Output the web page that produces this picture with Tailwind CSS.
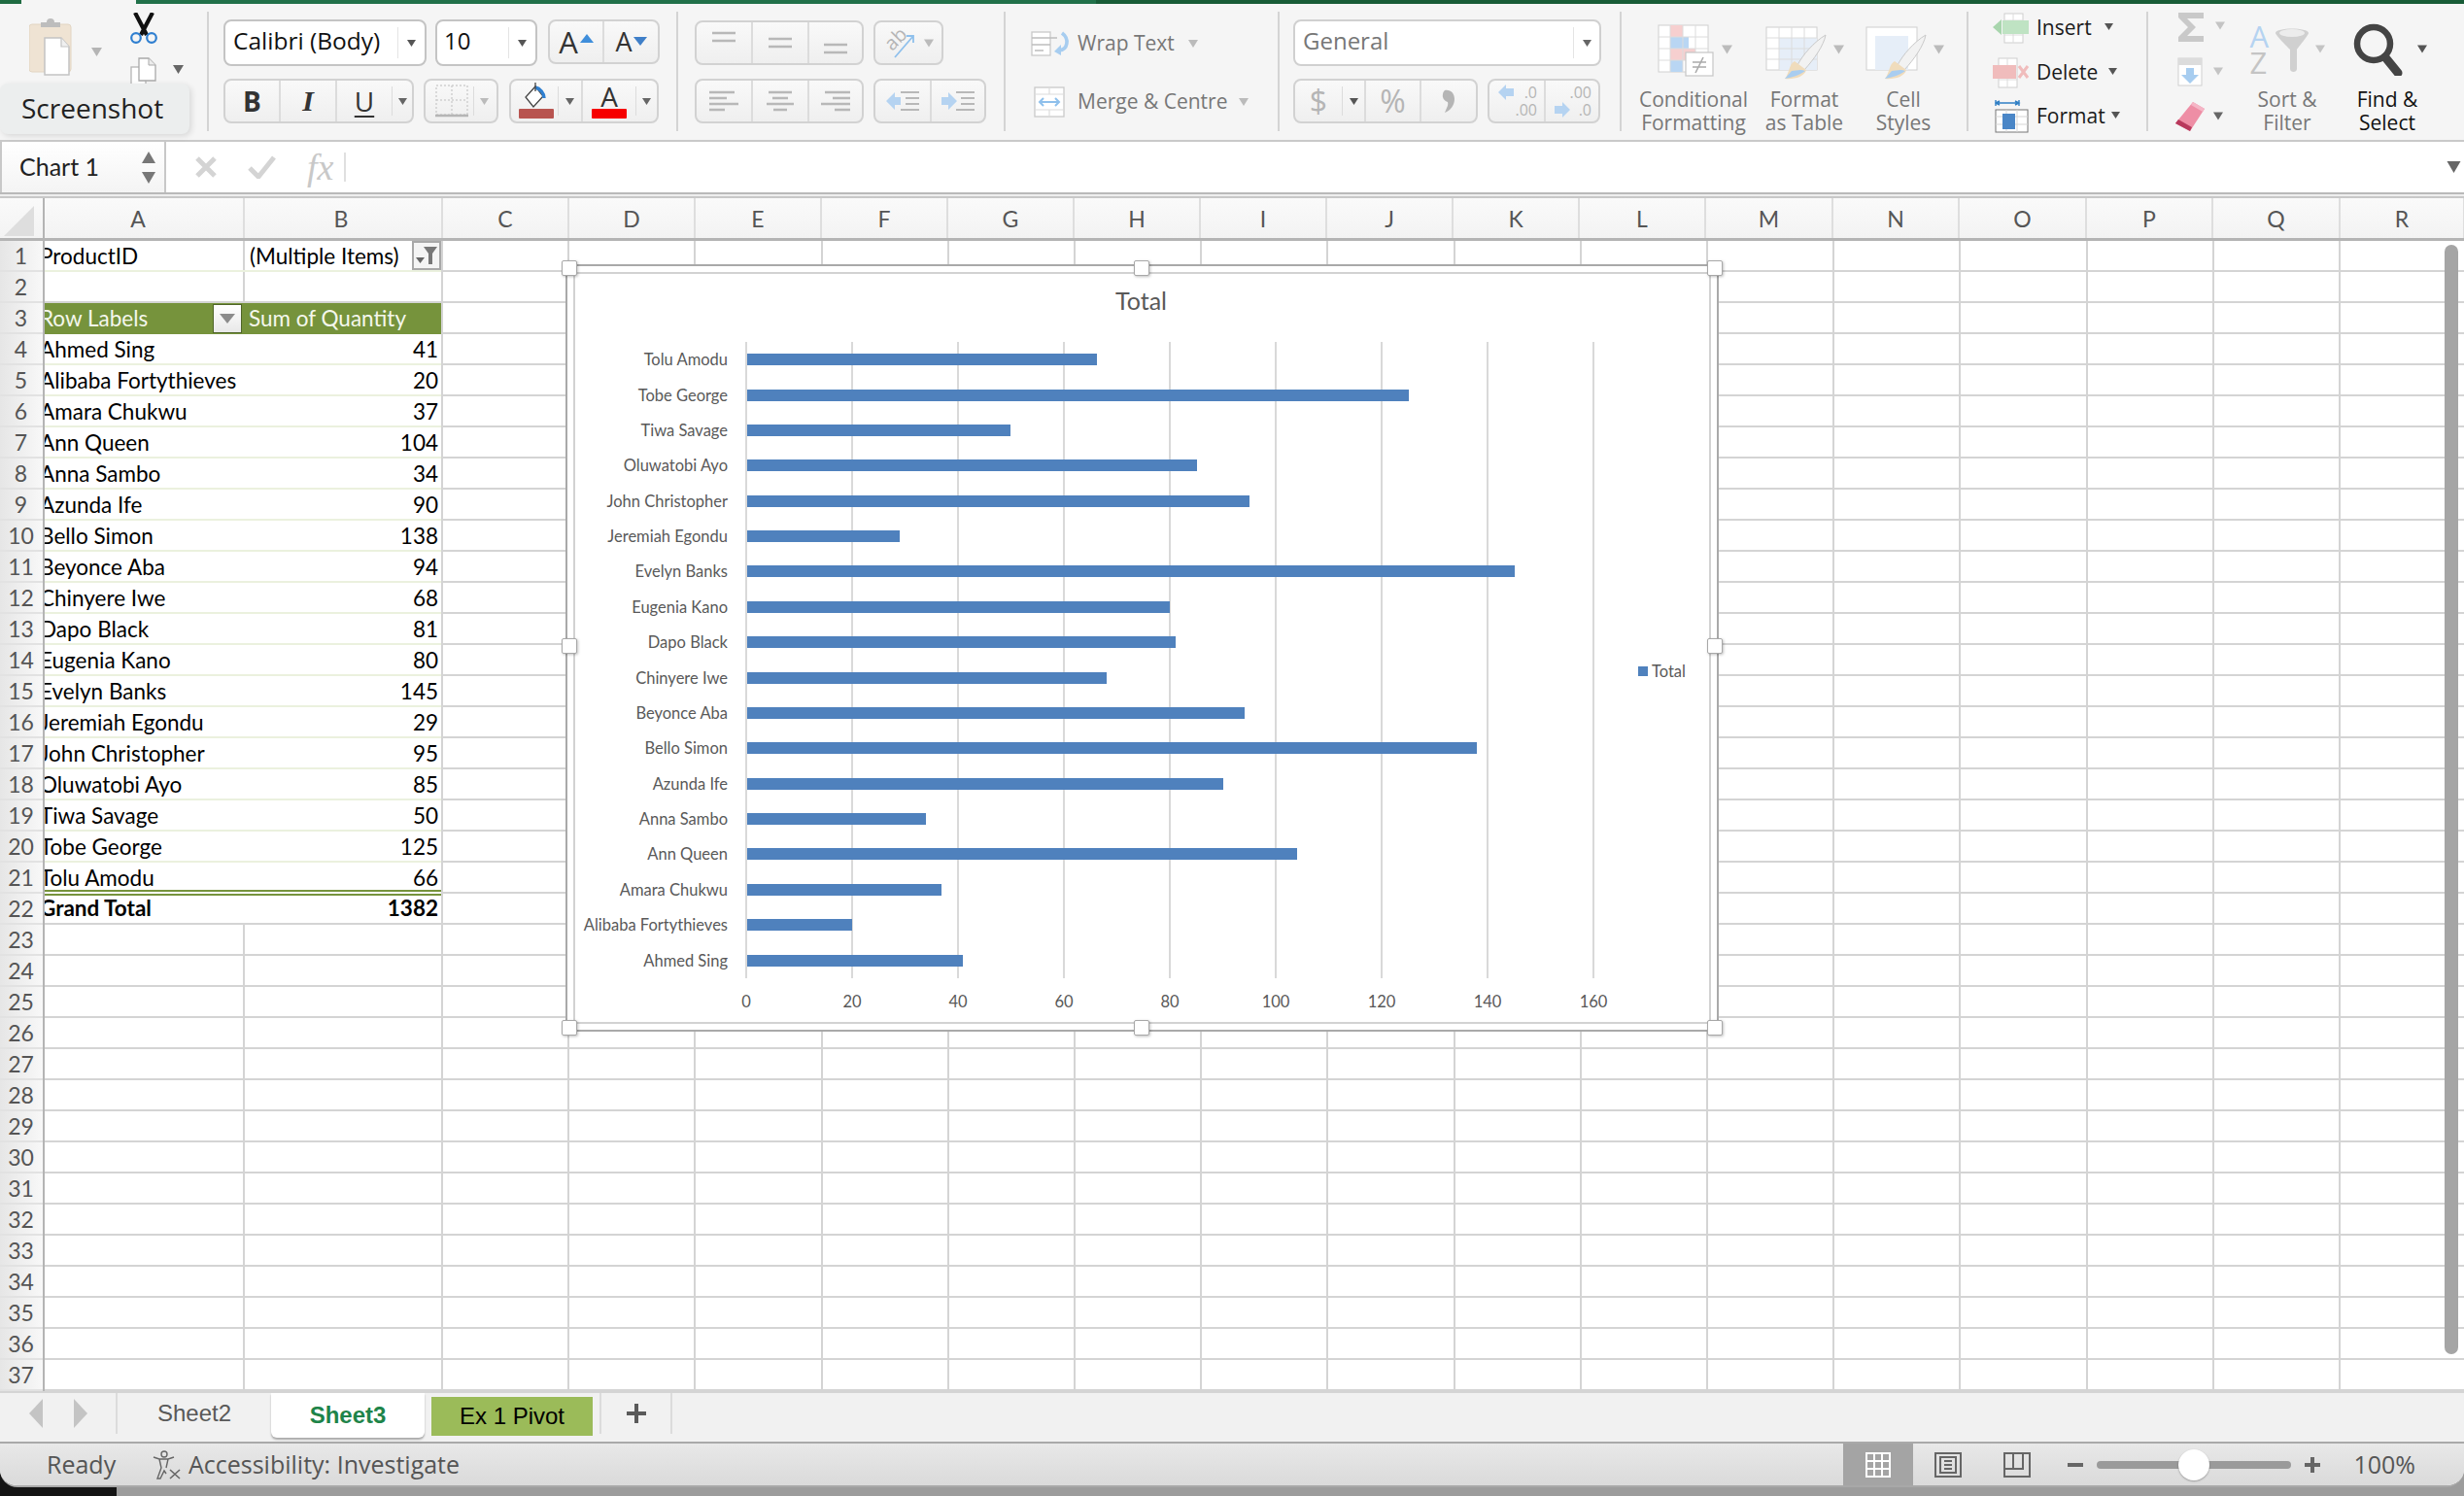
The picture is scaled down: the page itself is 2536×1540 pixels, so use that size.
<!doctype html>
<html>
<head>
<meta charset="utf-8">
<script src="https://cdn.jsdelivr.net/npm/@tailwindcss/browser@4"></script>
</head>
<body class="m-0">
<div class="relative w-[2536px] h-[1540px] overflow-hidden bg-[#9c9c9c] font-['Open_Sans',sans-serif]">
<div class="absolute left-0 bottom-0 w-[120px] h-[40px] bg-[#141414]"></div>
<div class="relative h-[1531px] flex flex-col rounded-b-[18px] overflow-hidden bg-white border-b-2 border-[#a8a8a8]">

<!-- title strip -->
<div class="flex h-[4px] shrink-0 bg-[#185c37]">
  <div class="w-[22px] bg-[#1f6b41]"></div><div class="w-[118px] bg-[#f5f5f5]"></div><div class="w-[988px] bg-[#21714a]"></div>
</div>

<!-- ribbon -->
<div class="relative flex h-[142px] shrink-0 bg-[#f5f5f5] border-b-2 border-[#c9c9c9]">
  <!-- clipboard -->
  <div class="flex w-[213px] shrink-0 pl-[30px] pt-[9px]">
    <svg class="w-[48px] h-[62px] mt-[5px]" viewBox="0 0 48 62"><rect x="0" y="7" width="43" height="49" rx="3" fill="#efe3d3" stroke="#e2d5c2"/><path d="M12 8h20V3H26a4 4 0 0 0-8 0h-6z" fill="#bdbdbd" transform="translate(0 2)"/><path d="M16 21h17l8 9v29H16z" fill="#fff" stroke="#c4c4c4" stroke-width="1.5"/><path d="M33 21v9h8" fill="#f0f0f0" stroke="#c4c4c4" stroke-width="1.2"/></svg>
    <svg class="w-[11px] h-[9px] mt-[36px] ml-[16px]" viewBox="0 0 10 8"><path d="M0 0h10L5 8z" fill="#b5b5b5"/></svg>
    <div class="flex flex-col ml-[29px]">
      <svg class="w-[28px] h-[32px]" viewBox="0 0 28 32"><path d="M5 0l12 23M23 0L11 23" stroke="#111" stroke-width="4.2" fill="none"/><circle cx="6" cy="26" r="4.800" fill="none" stroke="#2f7fd0" stroke-width="2.200"/><circle cx="22" cy="26" r="4.800" fill="none" stroke="#2f7fd0" stroke-width="2.200"/></svg>
      <div class="flex mt-[14px]">
        <svg class="w-[28px] h-[28px]" viewBox="0 0 28 28"><rect x="1" y="10" width="15" height="18" fill="#fff" stroke="#b5b5b5" stroke-width="1.3"/><path d="M9 1h10l7 7v16H9z" fill="#fff" stroke="#a9a9a9" stroke-width="1.3"/><path d="M19 1v7h7" fill="#ececec" stroke="#a9a9a9" stroke-width="1"/></svg>
        <svg class="w-[11px] h-[9px] mt-[8px] ml-[16px]" viewBox="0 0 10 8"><path d="M0 0h10L5 8z" fill="#666"/></svg>
      </div>
    </div>
  </div>
  <div class="w-[2px] h-[123px] mt-[8px] bg-[#d4d4d4] shrink-0"></div>

  <!-- font -->
  <div class="flex flex-col w-[481px] shrink-0 pl-[15px] pt-[16px] gap-[13px]">
    <div class="flex h-[48px]">
      <div class="flex items-center justify-between w-[209px] rounded-lg border-2 border-[#c4c4c4] bg-white pl-[8px] pr-[9px] text-[24.500px] leading-[30px] text-[#111]"><span class="mb-[4px] whitespace-nowrap">Calibri (Body)</span><span class="flex items-center h-[32px] border-l border-[#e4e4e4] pl-[9px]"><svg class="w-[9px] h-[9px]" viewBox="0 0 10 8"><path d="M0 0h10L5 8z" fill="#555"/></svg></span></div>
      <div class="flex items-center justify-between w-[105px] ml-[9px] rounded-lg border-2 border-[#c4c4c4] bg-white pl-[7px] pr-[9px] text-[24px] leading-[30px] text-[#111]"><span class="mb-[4px]">10</span><span class="flex items-center h-[32px] border-l border-[#e4e4e4] pl-[9px]"><svg class="w-[9px] h-[9px]" viewBox="0 0 10 8"><path d="M0 0h10L5 8z" fill="#555"/></svg></span></div>
      <div class="flex w-[115px] ml-[11px] h-[46px] rounded-lg border-2 border-[#d2d2d2] bg-gradient-to-b from-[#f9f9f9] to-[#efefef] text-[#333] leading-[38px]">
        <div class="flex items-center justify-center gap-[2px] w-[56px] border-r-2 border-[#dcdcdc] text-[31px]"><span>A</span><svg class="w-[14px] h-[9px] mb-[8px]" viewBox="0 0 14 9"><path d="M7 0l7 9H0z" fill="#3f8edb"/></svg></div>
        <div class="flex items-center justify-center gap-[1px] flex-1 text-[27px]"><span>A</span><svg class="w-[14px] h-[9px] mb-[2px]" viewBox="0 0 14 9"><path d="M7 9L0 0h14z" fill="#3f7fc8"/></svg></div>
      </div>
    </div>
    <div class="flex h-[46px]">
      <div class="flex w-[196px] rounded-lg border-2 border-[#d2d2d2] bg-gradient-to-b from-[#f9f9f9] to-[#efefef] text-[#333] text-[28px] leading-[38px]">
        <div class="flex items-center justify-center w-[57px] border-r-2 border-[#dcdcdc] font-bold">B</div>
        <div class="flex items-center justify-center w-[58px] border-r-2 border-[#dcdcdc] italic font-bold font-['Liberation_Serif',serif] text-[30px]">I</div>
        <div class="flex items-center justify-center w-[56px] underline underline-offset-[4px] font-normal">U</div>
        <div class="flex items-center flex-1 pl-[1px] h-[30px] mt-[6px] border-l border-[#dcdcdc]"><svg class="w-[9px] h-[9px] ml-[5px]" viewBox="0 0 10 8"><path d="M0 0h10L5 8z" fill="#666"/></svg></div>
      </div>
      <div class="flex items-center w-[77px] ml-[10px] rounded-lg border-2 border-[#d2d2d2] bg-gradient-to-b from-[#f9f9f9] to-[#efefef]">
        <svg class="w-[34px] h-[34px] ml-[10px]" viewBox="0 0 34 34"><path d="M1 1h32v30H1zM17 1v30M1 16h32" fill="none" stroke="#cfcfcf" stroke-width="1.5" stroke-dasharray="2 2"/><path d="M0 32h34" stroke="#b5b5b5" stroke-width="2.4"/></svg>
        <span class="h-[30px] border-l border-[#dcdcdc] ml-[5px] mr-[6px]"></span><svg class="w-[9px] h-[9px]" viewBox="0 0 10 8"><path d="M0 0h10L5 8z" fill="#bbb"/></svg>
      </div>
      <div class="flex w-[154px] ml-[11px] rounded-lg border-2 border-[#d2d2d2] bg-gradient-to-b from-[#f9f9f9] to-[#efefef]">
        <div class="flex flex-col items-center w-[48px] pt-[2px] pl-[3px]">
          <svg class="w-[26px] h-[27px]" viewBox="0 0 26 27"><path d="M12 4L2 15l8 10 10-11z" fill="#fff" stroke="#444" stroke-width="1.3"/><path d="M12 5c5 1 9 6 9 11" fill="none" stroke="#2f7fd0" stroke-width="3.4"/><path d="M12 0v9" stroke="#444" stroke-width="1.3"/></svg>
          <div class="w-[36px] h-[10px] bg-[#b85450] rounded-[1px]"></div>
        </div>
        <div class="flex items-center justify-center w-[24px] h-[30px] mt-[6px] border-l border-[#dcdcdc]"><svg class="w-[9px] h-[9px]" viewBox="0 0 10 8"><path d="M0 0h10L5 8z" fill="#666"/></svg></div>
        <div class="flex flex-col items-center w-[56px] border-l-2 border-[#dcdcdc] text-[#333] text-[28px] pt-[1px]"><span class="h-[28px] leading-[30px]">A</span><div class="w-[36px] h-[10px] bg-[#f60000] rounded-[1px]"></div></div>
        <div class="flex items-center justify-center flex-1 h-[30px] mt-[6px] border-l border-[#dcdcdc]"><svg class="w-[9px] h-[9px]" viewBox="0 0 10 8"><path d="M0 0h10L5 8z" fill="#666"/></svg></div>
      </div>
    </div>
  </div>
  <div class="w-[2px] h-[123px] mt-[8px] bg-[#d4d4d4] shrink-0"></div>

  <!-- alignment -->
  <div class="flex flex-col w-[335px] shrink-0 pl-[17px] pt-[17px] gap-[14px]">
    <div class="flex h-[46px]">
      <div class="flex w-[174px] rounded-lg border-2 border-[#d2d2d2] bg-gradient-to-b from-[#f9f9f9] to-[#efefef]">
        <div class="flex justify-center w-[58px] border-r-2 border-[#dcdcdc] pt-[9px]"><svg class="w-[26px] h-[12px]" viewBox="0 0 26 12"><path d="M1 2h24M1 10h24" stroke="#b8b8b8" stroke-width="2.4"/></svg></div>
        <div class="flex justify-center items-center w-[58px] border-r-2 border-[#dcdcdc]"><svg class="w-[26px] h-[12px]" viewBox="0 0 26 12"><path d="M1 2h24M1 10h24" stroke="#b8b8b8" stroke-width="2.4"/></svg></div>
        <div class="flex justify-center items-end flex-1 pb-[9px]"><svg class="w-[26px] h-[12px]" viewBox="0 0 26 12"><path d="M1 2h24M1 10h24" stroke="#b8b8b8" stroke-width="2.4"/></svg></div>
      </div>
      <div class="flex items-center w-[72px] ml-[10px] rounded-lg border-2 border-[#d2d2d2] bg-gradient-to-b from-[#f9f9f9] to-[#efefef]">
        <div class="relative w-[36px] h-[34px] ml-[8px]">
          <svg class="absolute inset-0 w-[36px] h-[34px]" viewBox="0 0 36 34"><path d="M12 32L31 10M24 10h7v7" stroke="#8fc0ec" stroke-width="1.8" fill="none"/></svg>
          <span class="absolute left-[1px] top-[1px] -rotate-45 text-[20px] leading-[24px] text-[#b5b5b5]">ab</span>
        </div>
        <svg class="w-[10px] h-[9px] ml-[6px]" viewBox="0 0 10 8"><path d="M0 0h10L5 8z" fill="#bbb"/></svg>
      </div>
    </div>
    <div class="flex h-[46px]">
      <div class="flex w-[174px] rounded-lg border-2 border-[#d2d2d2] bg-gradient-to-b from-[#f9f9f9] to-[#efefef]">
        <div class="flex justify-center items-center w-[58px] border-r-2 border-[#dcdcdc]"><svg class="w-[30px] h-[22px]" viewBox="0 0 30 22"><path d="M0 2h26M0 8h18M0 14h30M0 20h16" stroke="#b8b8b8" stroke-width="2.4"/></svg></div>
        <div class="flex justify-center items-center w-[58px] border-r-2 border-[#dcdcdc]"><svg class="w-[28px] h-[22px]" viewBox="0 0 28 22"><path d="M2 2h24M6 8h16M0 14h28M7 20h14" stroke="#b8b8b8" stroke-width="2.4"/></svg></div>
        <div class="flex justify-center items-center flex-1"><svg class="w-[30px] h-[22px]" viewBox="0 0 30 22"><path d="M4 2h26M12 8h18M0 14h30M14 20h16" stroke="#b8b8b8" stroke-width="2.4"/></svg></div>
      </div>
      <div class="flex w-[116px] ml-[10px] rounded-lg border-2 border-[#d2d2d2] bg-gradient-to-b from-[#f9f9f9] to-[#efefef]">
        <div class="flex justify-center items-center w-[58px] border-r-2 border-[#dcdcdc]"><svg class="w-[34px] h-[22px]" viewBox="0 0 34 22"><path d="M0 11L9 2v5h6v8H9v5z" fill="#b5d3f1"/><path d="M15 2h19M20 8h14M20 14h14M15 20h19" stroke="#b8b8b8" stroke-width="2.2"/></svg></div>
        <div class="flex justify-center items-center flex-1"><svg class="w-[34px] h-[22px]" viewBox="0 0 34 22"><path d="M16 11L7 2v5H0v8h7v5z" fill="#b5d3f1"/><path d="M15 2h19M20 8h14M20 14h14M15 20h19" stroke="#b8b8b8" stroke-width="2.2"/></svg></div>
      </div>
    </div>
  </div>
  <div class="w-[2px] h-[123px] mt-[8px] bg-[#d4d4d4] shrink-0"></div>

  <!-- wrap -->
  <div class="flex flex-col w-[280px] shrink-0 text-[21px] text-[#777] pl-[26px] pt-[26px] gap-[30px]">
    <div class="flex items-center h-[30px]">
      <svg class="w-[40px] h-[26px]" viewBox="0 0 40 26"><rect x="1" y="1" width="19" height="24" fill="#fff" stroke="#c9c9c9" stroke-width="1.3"/><path d="M1 7h26M1 14h19M4 20h9" stroke="#bdbdbd" stroke-width="1.4"/><path d="M32 2c8 6 6 17-3 18" fill="none" stroke="#a7cdf0" stroke-width="3.6"/><path d="M31 14l-7 7 7 4z" fill="#a7cdf0"/></svg>
      <span class="ml-[8px] whitespace-nowrap">Wrap Text</span>
      <svg class="w-[10px] h-[8px] ml-[14px]" viewBox="0 0 10 8"><path d="M0 0h10L5 8z" fill="#bbb"/></svg>
    </div>
    <div class="flex items-center h-[30px]">
      <svg class="w-[32px] h-[32px] ml-[3px]" viewBox="0 0 32 32"><rect x="1" y="1" width="30" height="30" fill="#fff" stroke="#c9c9c9" stroke-width="1.3"/><path d="M16 1v7M16 24v7M1 8h30M1 24h30" stroke="#dcdcdc" stroke-width="1.2"/><path d="M6 16h20M10 12l-4 4 4 4M22 12l4 4-4 4" fill="none" stroke="#8fc0ec" stroke-width="2"/></svg>
      <span class="ml-[13px] whitespace-nowrap">Merge &amp; Centre</span>
      <svg class="w-[10px] h-[8px] ml-[12px]" viewBox="0 0 10 8"><path d="M0 0h10L5 8z" fill="#bbb"/></svg>
    </div>
  </div>
  <div class="w-[2px] h-[123px] mt-[8px] bg-[#d4d4d4] shrink-0"></div>

  <!-- number -->
  <div class="flex flex-col w-[350px] shrink-0 pl-[14px] pt-[16px] gap-[13px]">
    <div class="flex items-center justify-between w-[317px] h-[48px] rounded-lg border-2 border-[#d0d0d0] bg-white pl-[8px] pr-[8px] text-[24px] leading-[30px] text-[#777]"><span class="mb-[4px]">General</span><span class="flex items-center h-[32px] border-l border-[#e4e4e4] pl-[9px]"><svg class="w-[9px] h-[9px]" viewBox="0 0 10 8"><path d="M0 0h10L5 8z" fill="#666"/></svg></span></div>
    <div class="flex h-[46px]">
      <div class="flex w-[190px] rounded-lg border-2 border-[#d2d2d2] bg-gradient-to-b from-[#f9f9f9] to-[#efefef] text-[#b5b5b5] text-[32px] leading-[38px]">
        <div class="flex items-center w-[73px] border-r-2 border-[#dcdcdc]"><span class="w-[48px] text-center">$</span><span class="flex items-center h-[30px] border-l border-[#dcdcdc] pl-[7px]"><svg class="w-[9px] h-[9px]" viewBox="0 0 10 8"><path d="M0 0h10L5 8z" fill="#555"/></svg></span></div>
        <div class="flex items-center justify-center w-[57px] border-r-2 border-[#dcdcdc]">%</div>
        <div class="flex items-center justify-center flex-1"><svg class="w-[14px] h-[24px]" viewBox="0 0 14 24"><path d="M3 1c6-1 10 3 10 9 0 6-4 12-10 14 2-5 4-8 3-11C3 12 0 9 1 5 1 3 2 2 3 1z" fill="#b5b5b5"/></svg></div>
      </div>
      <div class="flex w-[116px] ml-[10px] rounded-lg border-2 border-[#d2d2d2] bg-gradient-to-b from-[#f9f9f9] to-[#efefef] text-[#b5b5b5] text-[16px] leading-[18px]">
        <div class="relative flex flex-col items-end justify-center w-[58px] border-r-2 border-[#dcdcdc] pr-[7px]"><svg class="absolute left-[9px] top-[4px] w-[16px] h-[16px]" viewBox="0 0 16 16"><path d="M0 8l8-8v4h8v8H8v4z" fill="#b5d3f1"/></svg><span>.0</span><span>.00</span></div>
        <div class="relative flex flex-col items-end justify-center flex-1 pr-[7px]"><svg class="absolute left-[9px] top-[22px] w-[16px] h-[16px]" viewBox="0 0 16 16"><path d="M16 8L8 0v4H0v8h8v4z" fill="#b5d3f1"/></svg><span>.00</span><span>.0</span></div>
      </div>
    </div>
  </div>
  <div class="w-[2px] h-[123px] mt-[8px] bg-[#d4d4d4] shrink-0"></div>

  <!-- styles -->
  <div class="flex w-[355px] shrink-0 text-[21px] leading-[24px] text-[#777] text-center">
    <div class="flex flex-col w-[148px] items-center">
      <div class="flex h-[86px] pt-[21px] pl-[2px]">
        <svg class="w-[58px] h-[54px]" viewBox="0 0 58 54"><rect x="1" y="1" width="51" height="48" fill="#fff" stroke="#d0d0d0"/><rect x="13" y="1" width="13" height="12" fill="#f6cfcf"/><rect x="13" y="13" width="19" height="12" fill="#b9d6f3"/><rect x="13" y="25" width="26" height="12" fill="#f6cfcf"/><rect x="13" y="37" width="13" height="12" fill="#b9d6f3"/><path d="M13 1v48M26 1v48M39 1v48M1 13h51M1 25h51M1 37h51" stroke="#dcdcdc" stroke-width="1"/><rect x="29" y="29" width="28" height="24" fill="#fff" stroke="#c9c9c9" stroke-width="1.3"/><path d="M36 39h14M36 44h14M47 34l-8 16" stroke="#aaa" stroke-width="1.6"/></svg>
        <svg class="w-[11px] h-[10px] mt-[21px] ml-[8px]" viewBox="0 0 10 8"><path d="M0 0h10L5 8z" fill="#bbb"/></svg>
      </div>
      <span class="whitespace-nowrap">Conditional<br>Formatting</span>
    </div>
    <div class="flex flex-col w-[80px] items-center">
      <div class="flex self-start h-[86px] pt-[23px]">
        <svg class="w-[64px] h-[56px]" viewBox="0 0 64 56"><rect x="1" y="1" width="52" height="44" fill="#fff" stroke="#d0d0d0"/><rect x="14" y="12" width="39" height="33" fill="#e6eef8"/><path d="M14 1v44M27 1v44M40 1v44M1 12h52M1 23h52M1 34h52" stroke="#dcdcdc"/><path d="M62 9C50 16 38 30 33 40l7 5C50 34 60 20 62 9z" fill="#f2f2f2" stroke="#c9c9c9"/><path d="M30 36c-6 3-5 12-10 18 10 1 20-2 22-9z" fill="#f0dcbc"/><path d="M20 54c6-1 14-3 21-8-5-2-10 0-14 0z" fill="#a9cdf0"/></svg>
        <svg class="w-[11px] h-[10px] mt-[19px] ml-[6px]" viewBox="0 0 10 8"><path d="M0 0h10L5 8z" fill="#bbb"/></svg>
      </div>
      <span class="whitespace-nowrap">Format<br>as Table</span>
    </div>
    <div class="flex flex-col w-[124px] items-center">
      <div class="flex self-start h-[86px] pt-[23px] pl-[23px]">
        <svg class="w-[64px] h-[56px]" viewBox="0 0 64 56"><rect x="1" y="1" width="52" height="44" fill="#fff" stroke="#d0d0d0"/><rect x="10" y="10" width="34" height="35" fill="#e6eef8"/><path d="M62 9C50 16 38 30 33 40l7 5C50 34 60 20 62 9z" fill="#f2f2f2" stroke="#c9c9c9"/><path d="M30 36c-6 3-5 12-10 18 10 1 20-2 22-9z" fill="#f0dcbc"/><path d="M20 54c6-1 14-3 21-8-5-2-10 0-14 0z" fill="#a9cdf0"/></svg>
        <svg class="w-[11px] h-[10px] mt-[19px] ml-[6px]" viewBox="0 0 10 8"><path d="M0 0h10L5 8z" fill="#bbb"/></svg>
      </div>
      <span class="whitespace-nowrap">Cell<br>Styles</span>
    </div>
  </div>
  <div class="w-[2px] h-[123px] mt-[8px] bg-[#d4d4d4] shrink-0"></div>

  <!-- cells -->
  <div class="flex flex-col w-[183px] shrink-0 pl-[25px] pt-[9px] text-[21px] text-[#1a1a1a]">
    <div class="flex items-center h-[32px]"><svg class="w-[38px] h-[32px]" viewBox="0 0 38 32"><rect x="12" y="1" width="19" height="30" fill="#fff" stroke="#cfcfcf"/><path d="M21 1v30M12 8h19M12 23h19" stroke="#dcdcdc"/><rect x="10" y="8" width="27" height="14" fill="#bfe3c3"/><path d="M0 15l9-8v16z" fill="#a8d5ad"/></svg><span class="ml-[7px]">Insert</span><svg class="w-[9px] h-[9px] ml-[13px] mb-[4px]" viewBox="0 0 10 8"><path d="M0 0h10L5 8z" fill="#555"/></svg></div>
    <div class="flex items-center h-[32px] mt-[14px]"><svg class="w-[38px] h-[32px]" viewBox="0 0 38 32"><rect x="6" y="1" width="19" height="30" fill="#fff" stroke="#cfcfcf"/><path d="M15 1v30M6 23h19" stroke="#dcdcdc"/><rect x="0" y="8" width="24" height="14" fill="#f0bcbc"/><path d="M27 9l9 12M36 9l-9 12" stroke="#f0bcbc" stroke-width="3"/></svg><span class="ml-[7px]">Delete</span><svg class="w-[9px] h-[9px] ml-[11px] mb-[4px]" viewBox="0 0 10 8"><path d="M0 0h10L5 8z" fill="#555"/></svg></div>
    <div class="flex items-center h-[36px] mt-[11px]"><svg class="w-[36px] h-[34px] ml-[2px]" viewBox="0 0 36 34"><path d="M1 3h24M1 0v6M25 0v6M5 1L1 3l4 2M21 1l4 2-4 2" stroke="#2f7fc5" stroke-width="1.4" fill="none"/><rect x="1" y="10" width="33" height="23" fill="#fff" stroke="#777"/><path d="M12 10v23M23 10v23M1 17h33M1 25h33" stroke="#d5d5d5"/><rect x="8" y="14" width="13" height="16" fill="#4a86c7"/></svg><span class="ml-[7px]">Format</span><svg class="w-[9px] h-[9px] ml-[6px] mb-[4px]" viewBox="0 0 10 8"><path d="M0 0h10L5 8z" fill="#555"/></svg></div>
  </div>
  <div class="w-[2px] h-[123px] mt-[8px] bg-[#d4d4d4] shrink-0"></div>

  <!-- editing -->
  <div class="flex shrink-0 text-[21px] leading-[24px] text-center">
    <div class="flex flex-col w-[92px] pl-[30px] pt-[8px]">
      <div class="flex items-start"><svg class="w-[28px] h-[32px]" viewBox="0 0 28 32"><path d="M1 1h26v6H10l9 9-9 9h17v6H1v-5l10-10L1 6z" fill="#c9c9c9"/></svg><svg class="w-[10px] h-[9px] ml-[11px] mt-[10px]" viewBox="0 0 10 8"><path d="M0 0h10L5 8z" fill="#c4c4c4"/></svg></div>
      <div class="flex items-start mt-[15px]"><svg class="w-[26px] h-[30px]" viewBox="0 0 26 30"><rect x="1" y="1" width="24" height="28" fill="#fff" stroke="#cfcfcf"/><rect x="1" y="1" width="24" height="7" fill="#dcdcdc"/><path d="M9 11h8v7h5l-9 9-9-9h5z" fill="#a7cdf0"/></svg><svg class="w-[10px] h-[9px] ml-[11px] mt-[10px]" viewBox="0 0 10 8"><path d="M0 0h10L5 8z" fill="#c4c4c4"/></svg></div>
      <div class="flex items-start mt-[15px] -ml-[4px]"><svg class="w-[33px] h-[32px]" viewBox="0 0 33 32"><path d="M20 1l12 7-15 23L2 23z" fill="#ee8ea5"/><path d="M2 23l15 8 2-4L5 19z" fill="#b8395c"/><path d="M20 1l12 7-2 3L18 4z" fill="#f5b6c6"/></svg><svg class="w-[10px] h-[9px] ml-[8px] mt-[11px]" viewBox="0 0 10 8"><path d="M0 0h10L5 8z" fill="#666"/></svg></div>
    </div>
    <div class="flex flex-col w-[102px] items-center text-[#777]">
      <div class="flex h-[86px] pt-[20px]">
        <div class="flex flex-col w-[25px] text-left text-[31px] leading-[27px]"><span class="text-[#b5d3f1]">A</span><span class="text-[#c4c4c4]">Z</span></div>
        <svg class="w-[37px] h-[54px]" viewBox="25 0 37 54"><path d="M26 10c0-6 34-6 34 0 0 2-10 14-12 17v20c0 4-7 4-7 0V27C38 24 26 12 26 10z" fill="#d0d0d0"/><ellipse cx="43" cy="10" rx="13" ry="4" fill="#ececec"/></svg>
        <svg class="w-[10px] h-[9px] mt-[22px] ml-[5px]" viewBox="0 0 10 8"><path d="M0 0h10L5 8z" fill="#c4c4c4"/></svg>
      </div>
      <span class="whitespace-nowrap">Sort &amp;<br>Filter</span>
    </div>
    <div class="flex flex-col w-[104px] items-center text-[#111]">
      <div class="flex self-start h-[86px] pt-[20px] pl-[17px]">
        <svg class="w-[54px] h-[54px]" viewBox="0 0 54 54"><circle cx="21" cy="21" r="17" fill="none" stroke="#444" stroke-width="6.500"/><path d="M33 35l13 16" stroke="#444" stroke-width="9" stroke-linecap="round"/></svg>
        <svg class="w-[10px] h-[9px] mt-[22px] ml-[12px]" viewBox="0 0 10 8"><path d="M0 0h10L5 8z" fill="#555"/></svg>
      </div>
      <span class="whitespace-nowrap">Find &amp;<br>Select</span>
    </div>
  </div>

  <!-- tooltip -->
  <div class="absolute left-0 top-[82px] w-[195px] h-[52px] flex items-center pl-[22px] pb-[2px] rounded-r-lg rounded-l-lg bg-[#eceeee] shadow-[2px_2px_6px_rgba(0,0,0,0.12)] text-[28px] leading-[36px] text-[#222]">Screenshot</div>
</div>

<!-- formula bar -->
<div class="flex h-[54px] shrink-0 bg-white border-b-2 border-[#b9b9b9]">
  <div class="flex items-center w-[171px] border-l-2 border-r-2 border-[#c8c8c8] bg-gradient-to-b from-white to-[#f4f4f4] pl-[18px] font-['Lato',sans-serif] text-[25px] text-[#222]">
    <span class="flex-1">Chart 1</span>
    <span class="flex flex-col gap-[9px] pr-[9px]"><svg class="w-[14px] h-[12px]" viewBox="0 0 14 12"><path d="M7 0l7 12H0z" fill="#777"/></svg><svg class="w-[14px] h-[12px]" viewBox="0 0 14 12"><path d="M7 12L0 0h14z" fill="#777"/></svg></span>
  </div>
  <div class="flex items-center flex-1 pl-[29px]">
    <svg class="w-[24px] h-[24px]" viewBox="0 0 24 24"><path d="M3 3l18 18M21 3L3 21" stroke="#d4d4d4" stroke-width="5"/></svg>
    <svg class="w-[30px] h-[24px] ml-[31px]" viewBox="0 0 30 24"><path d="M2 13l9 9L27 2" fill="none" stroke="#d4d4d4" stroke-width="5"/></svg>
    <span class="ml-[31px] w-[33px] font-['Liberation_Serif',serif] italic text-[38px] leading-[44px] text-[#c8c8c8]">fx</span>
    <span class="h-[30px] w-[2px] bg-[#e0e0e0] ml-[5px]"></span>
    <span class="flex-1"></span>
    <svg class="w-[15px] h-[12px] mr-[3px]" viewBox="0 0 14 12"><path d="M7 12L0 0h14z" fill="#666"/></svg>
  </div>
</div>
<div class="h-[2px] shrink-0 bg-[#eeeeee]"></div>
<div class="h-[2px] shrink-0 bg-[#c8c8c8]"></div>

<!-- column header -->
<div class="flex h-[44px] shrink-0 border-b-[3px] border-[#b4b4b4] bg-gradient-to-b from-[#fafafa] to-[#f3f3f3] font-['Lato',sans-serif] text-[23px] text-[#555] *:flex *:items-center *:justify-center *:border-r-2 *:border-[#dedede] *:shrink-0 *:pt-[2px]">
  <div class="w-[46px] !border-[#b4b4b4]"><svg class="w-[32px] h-[32px] mt-[4px] -ml-[4px]" viewBox="0 0 32 32"><path d="M31 0v31H0z" fill="#dedede"/></svg></div>
  <div class="w-[206px] pr-[12px]">A</div><div class="w-[204px] pr-[4px]">B</div>
  <div class="w-[130px]">C</div><div class="w-[130px]">D</div><div class="w-[130px]">E</div><div class="w-[130px]">F</div><div class="w-[130px]">G</div><div class="w-[130px]">H</div><div class="w-[130px]">I</div><div class="w-[130px]">J</div><div class="w-[130px]">K</div><div class="w-[130px]">L</div><div class="w-[131px]">M</div><div class="w-[130px]">N</div><div class="w-[131px]">O</div><div class="w-[130px]">P</div><div class="w-[131px]">Q</div><div class="w-[128px]">R</div>
</div>

<!-- sheet -->
<div class="relative flex h-[1184px] shrink-0 font-['Lato',sans-serif] text-[22.500px]">
  <!-- row numbers -->
  <div class="flex flex-col w-[46px] shrink-0 border-r-2 border-[#b4b4b4] bg-gradient-to-r from-[#e6e6e6] to-[#f8f8f8] text-[23px] text-[#555] *:flex *:items-center *:justify-center *:h-8 *:border-b-2 *:border-[#e2e2e2] *:pr-[1px]">
    <div>1</div><div>2</div><div>3</div><div>4</div><div>5</div><div>6</div><div>7</div><div>8</div><div>9</div><div>10</div><div>11</div><div>12</div><div>13</div><div>14</div><div>15</div><div>16</div><div>17</div><div>18</div><div>19</div><div>20</div><div>21</div><div>22</div><div>23</div><div>24</div><div>25</div><div>26</div><div>27</div><div>28</div><div>29</div><div>30</div><div>31</div><div>32</div><div>33</div><div>34</div><div>35</div><div>36</div><div>37</div>
  </div>

  <!-- columns A and B -->
  <div class="flex flex-col w-[410px] shrink-0 border-r-2 border-[#d4d4d4] text-black">
    <div class="flex h-8 border-b-2 border-[#ebf1de] *:leading-[32px]"><div class="relative w-[206px] border-r-2 border-[#d4d4d4] overflow-hidden whitespace-nowrap -indent-[5px]">ProductID</div><div class="flex-1 pl-[5px] relative">(Multiple Items)<span class="absolute right-0 top-0 flex items-center justify-center w-[30px] h-[30px] border-2 border-[#a8a8a8] bg-[#f4f4f4]"><svg class="w-[24px] h-[22px]" viewBox="0 0 24 22"><path d="M1 13h9l-4.500 6z" fill="#666"/><path d="M9 2h14l-5 7v11h-4V9z" fill="#777"/></svg></span></div></div>
    <div class="flex h-8 border-b-2 border-[#d4d4d4]"><div class="w-[206px] border-r-2 border-[#d4d4d4]"></div></div>
    <div class="flex items-center h-8 bg-[#76933c] text-[#f4f7ec] overflow-hidden"><div class="relative w-[206px] whitespace-nowrap -indent-[5px] leading-[32px]">Row Labels<span class="absolute right-[3px] top-[1px] indent-0 flex items-center justify-center w-[30px] h-[30px] bg-gradient-to-b from-white to-[#e8e8e8] border border-[#4f6528]"><svg class="w-[16px] h-[10px]" viewBox="0 0 16 10"><path d="M0 0h16L8 10z" fill="#8c8c8c"/></svg></span></div><div class="flex-1 pl-[4px] leading-[32px]">Sum of Quantity</div></div>
    <div class="flex flex-col *:flex *:justify-between *:h-8 *:border-b-2 *:border-[#ebf1de] *:pr-[3px] *:leading-[31px] *:overflow-hidden *:whitespace-nowrap *:-indent-[5px]">
      <div><span>Ahmed Sing</span><span>41</span></div>
      <div><span>Alibaba Fortythieves</span><span>20</span></div>
      <div><span>Amara Chukwu</span><span>37</span></div>
      <div><span>Ann Queen</span><span>104</span></div>
      <div><span>Anna Sambo</span><span>34</span></div>
      <div><span>Azunda Ife</span><span>90</span></div>
      <div><span>Bello Simon</span><span>138</span></div>
      <div><span>Beyonce Aba</span><span>94</span></div>
      <div><span>Chinyere Iwe</span><span>68</span></div>
      <div><span>Dapo Black</span><span>81</span></div>
      <div><span>Eugenia Kano</span><span>80</span></div>
      <div><span>Evelyn Banks</span><span>145</span></div>
      <div><span>Jeremiah Egondu</span><span>29</span></div>
      <div><span>John Christopher</span><span>95</span></div>
      <div><span>Oluwatobi Ayo</span><span>85</span></div>
      <div><span>Tiwa Savage</span><span>50</span></div>
      <div><span>Tobe George</span><span>125</span></div>
      <div class="!h-[34px] !border-b-[6px] !border-double !border-[#76933c]"><span>Tolu Amodu</span><span>66</span></div>
      <div class="!h-[30px] font-bold !border-[#d4d4d4] !leading-[26px]"><span>Grand Total</span><span>1382</span></div>
    </div>
    <div class="flex-1 bg-[repeating-linear-gradient(180deg,transparent_0,transparent_30px,#d4d4d4_30px,#d4d4d4_32px),linear-gradient(90deg,transparent_204px,#d4d4d4_204px,#d4d4d4_206px,transparent_206px)]"></div>
  </div>

  <!-- remaining cells -->
  <div class="relative flex-1 bg-[repeating-linear-gradient(180deg,transparent_0,transparent_30px,#d4d4d4_30px,#d4d4d4_32px),repeating-linear-gradient(90deg,transparent_0,transparent_128.2px,#d4d4d4_128.2px,#d4d4d4_130.2px)]">
    <!-- chart -->
    <div class="absolute left-[126px] top-[24px] w-[1187px] h-[790px] border-2 border-[#a9a9a9] bg-white p-[6px]">
      <div class="relative h-full border-2 border-[#d2d2d2] bg-white text-[#595959] text-[16.500px] leading-[20px]">
        <div class="absolute left-[175px] top-[70px] w-[874px] h-[655px] bg-[repeating-linear-gradient(90deg,#d9d9d9_0,#d9d9d9_2px,transparent_2px,transparent_109px)]"></div>
        <div class="text-center text-[25px] leading-[30px] pt-[12px] h-[70px] pr-[2px]">Total</div>
        <div class="relative flex flex-col *:flex *:items-center *:h-[36.39px]">
          <div><span class="w-[157px] text-right whitespace-nowrap">Tolu Amodu</span><span class="h-[12px] ml-[20px] bg-[#4f81bd]" style="width:360px"></span></div>
          <div><span class="w-[157px] text-right whitespace-nowrap">Tobe George</span><span class="h-[12px] ml-[20px] bg-[#4f81bd]" style="width:681px"></span></div>
          <div><span class="w-[157px] text-right whitespace-nowrap">Tiwa Savage</span><span class="h-[12px] ml-[20px] bg-[#4f81bd]" style="width:271px"></span></div>
          <div><span class="w-[157px] text-right whitespace-nowrap">Oluwatobi Ayo</span><span class="h-[12px] ml-[20px] bg-[#4f81bd]" style="width:463px"></span></div>
          <div><span class="w-[157px] text-right whitespace-nowrap">John Christopher</span><span class="h-[12px] ml-[20px] bg-[#4f81bd]" style="width:517px"></span></div>
          <div><span class="w-[157px] text-right whitespace-nowrap">Jeremiah Egondu</span><span class="h-[12px] ml-[20px] bg-[#4f81bd]" style="width:157px"></span></div>
          <div><span class="w-[157px] text-right whitespace-nowrap">Evelyn Banks</span><span class="h-[12px] ml-[20px] bg-[#4f81bd]" style="width:790px"></span></div>
          <div><span class="w-[157px] text-right whitespace-nowrap">Eugenia Kano</span><span class="h-[12px] ml-[20px] bg-[#4f81bd]" style="width:435px"></span></div>
          <div><span class="w-[157px] text-right whitespace-nowrap">Dapo Black</span><span class="h-[12px] ml-[20px] bg-[#4f81bd]" style="width:441px"></span></div>
          <div><span class="w-[157px] text-right whitespace-nowrap">Chinyere Iwe</span><span class="h-[12px] ml-[20px] bg-[#4f81bd]" style="width:370px"></span></div>
          <div><span class="w-[157px] text-right whitespace-nowrap">Beyonce Aba</span><span class="h-[12px] ml-[20px] bg-[#4f81bd]" style="width:512px"></span></div>
          <div><span class="w-[157px] text-right whitespace-nowrap">Bello Simon</span><span class="h-[12px] ml-[20px] bg-[#4f81bd]" style="width:751px"></span></div>
          <div><span class="w-[157px] text-right whitespace-nowrap">Azunda Ife</span><span class="h-[12px] ml-[20px] bg-[#4f81bd]" style="width:490px"></span></div>
          <div><span class="w-[157px] text-right whitespace-nowrap">Anna Sambo</span><span class="h-[12px] ml-[20px] bg-[#4f81bd]" style="width:184px"></span></div>
          <div><span class="w-[157px] text-right whitespace-nowrap">Ann Queen</span><span class="h-[12px] ml-[20px] bg-[#4f81bd]" style="width:566px"></span></div>
          <div><span class="w-[157px] text-right whitespace-nowrap">Amara Chukwu</span><span class="h-[12px] ml-[20px] bg-[#4f81bd]" style="width:200px"></span></div>
          <div><span class="w-[157px] text-right whitespace-nowrap">Alibaba Fortythieves</span><span class="h-[12px] ml-[20px] bg-[#4f81bd]" style="width:108px"></span></div>
          <div><span class="w-[157px] text-right whitespace-nowrap">Ahmed Sing</span><span class="h-[12px] ml-[20px] bg-[#4f81bd]" style="width:222px"></span></div>
        </div>
        <div class="flex ml-[121.5px] mt-[14px] *:w-[109px] *:text-center">
          <span>0</span><span>20</span><span>40</span><span>60</span><span>80</span><span>100</span><span>120</span><span>140</span><span>160</span>
        </div>
        <div class="absolute left-[1094px] top-[399px] flex items-center gap-[4px]"><span class="w-[10px] h-[10px] bg-[#4f81bd]"></span><span>Total</span></div>
      </div>
      <span class="absolute -left-[6px] -top-[6px] w-[16px] h-[16px] rounded-[2px] bg-white border border-[#a8a8a8] shadow-[1px_1px_3px_rgba(0,0,0,0.25)]"></span>
      <span class="absolute left-[583px] -top-[6px] w-[16px] h-[16px] rounded-[2px] bg-white border border-[#a8a8a8] shadow-[1px_1px_3px_rgba(0,0,0,0.25)]"></span>
      <span class="absolute -right-[6px] -top-[6px] w-[16px] h-[16px] rounded-[2px] bg-white border border-[#a8a8a8] shadow-[1px_1px_3px_rgba(0,0,0,0.25)]"></span>
      <span class="absolute -left-[6px] top-[383px] w-[16px] h-[16px] rounded-[2px] bg-white border border-[#a8a8a8] shadow-[1px_1px_3px_rgba(0,0,0,0.25)]"></span>
      <span class="absolute -right-[6px] top-[383px] w-[16px] h-[16px] rounded-[2px] bg-white border border-[#a8a8a8] shadow-[1px_1px_3px_rgba(0,0,0,0.25)]"></span>
      <span class="absolute -left-[6px] -bottom-[6px] w-[16px] h-[16px] rounded-[2px] bg-white border border-[#a8a8a8] shadow-[1px_1px_3px_rgba(0,0,0,0.25)]"></span>
      <span class="absolute left-[583px] -bottom-[6px] w-[16px] h-[16px] rounded-[2px] bg-white border border-[#a8a8a8] shadow-[1px_1px_3px_rgba(0,0,0,0.25)]"></span>
      <span class="absolute -right-[6px] -bottom-[6px] w-[16px] h-[16px] rounded-[2px] bg-white border border-[#a8a8a8] shadow-[1px_1px_3px_rgba(0,0,0,0.25)]"></span>
    </div>
    <div class="absolute right-[6px] top-[4px] w-[14px] h-[1142px] rounded-full bg-[#a5a5a5]"></div>
  </div>
</div>

<!-- sheet tabs -->
<div class="flex h-[54px] shrink-0 bg-[#f1f1f1] border-t-2 border-[#d4d4d4] border-b-2 !border-b-[#a9a9a9] text-[24px] font-['Liberation_Sans',sans-serif]">
  <div class="flex items-center w-[121px] h-[42px] border-r-2 border-[#dcdcdc] pl-[30px] gap-[32px]">
    <svg class="w-[14px] h-[30px]" viewBox="0 0 14 30"><path d="M14 0v30L0 15z" fill="#c4c4c4"/></svg>
    <svg class="w-[14px] h-[30px]" viewBox="0 0 14 30"><path d="M0 0v30l14-15z" fill="#c4c4c4"/></svg>
  </div>
  <div class="flex items-center justify-center w-[158px] h-[42px] text-[#595959]">Sheet2</div>
  <div class="flex items-center justify-center w-[158px] h-[46px] rounded-b-md bg-white shadow-[0_2px_2px_rgba(0,0,0,0.3)] text-[#1e8449] font-bold">Sheet3</div>
  <div class="flex items-center justify-center w-[166px] h-[40px] mt-[4px] ml-[7px] bg-[#9bbb59] text-black">Ex 1 Pivot</div>
  <div class="flex items-center justify-center w-[75px] h-[42px] ml-[7px] border-x-2 border-[#dcdcdc] text-[#555]"><svg class="w-[20px] h-[20px]" viewBox="0 0 20 20"><path d="M10 0v20M0 10h20" stroke="#5a5a5a" stroke-width="4"/></svg></div>
</div>

<!-- status bar -->
<div class="flex flex-1 items-center bg-gradient-to-b from-[#e8e8e8] to-[#dadada] text-[#555] text-[25px] leading-[32px]">
  <span class="ml-[48px] w-[109px] mb-[2px]">Ready</span>
  <svg class="w-[30px] h-[30px]" viewBox="0 0 30 30"><circle cx="12" cy="4" r="3" fill="none" stroke="#666" stroke-width="1.4"/><path d="M1 7l6 2h9l6-2M7 9l2 9-4 11h3l4-8 2 3M16 9l-2 9" fill="none" stroke="#666" stroke-width="1.4"/><path d="M18 20l10 9M28 20l-10 9" stroke="#666" stroke-width="1.6"/></svg>
  <span class="ml-[7px] mb-[2px]">Accessibility: Investigate</span>
  <span class="flex-1"></span>
  <div class="flex items-center justify-center w-[72px] h-full bg-[#a4a4a4]"><svg class="w-[26px] h-[26px]" viewBox="0 0 26 26"><path d="M1 1h24v24H1zM9 1v24M17 1v24M1 9h24M1 17h24" fill="#a4a4a4" stroke="#fff" stroke-width="2"/></svg></div>
  <svg class="w-[28px] h-[26px] ml-[22px]" viewBox="0 0 28 26"><rect x="1" y="1" width="26" height="24" fill="none" stroke="#666" stroke-width="2"/><rect x="6" y="5" width="16" height="16" fill="none" stroke="#666" stroke-width="2"/><path d="M10 9h8M10 13h8M10 17h8" stroke="#666" stroke-width="2"/></svg>
  <svg class="w-[28px] h-[26px] ml-[43px]" viewBox="0 0 28 26"><rect x="1" y="1" width="26" height="24" fill="none" stroke="#666" stroke-width="2"/><path d="M1 17h19V1M10 1v16" fill="none" stroke="#666" stroke-width="2"/></svg>
  <svg class="w-[16px] h-[4px] ml-[38px]" viewBox="0 0 16 4"><rect width="16" height="4" fill="#666"/></svg>
  <div class="relative w-[200px] h-[8px] ml-[14px] rounded-full bg-[#9a9a9a]"><span class="absolute left-[84px] -top-[12px] w-[32px] h-[32px] rounded-full bg-white shadow-[0_1px_2px_rgba(0,0,0,0.3)]"></span></div>
  <svg class="w-[16px] h-[16px] ml-[14px]" viewBox="0 0 16 16"><path d="M8 0v16M0 8h16" stroke="#666" stroke-width="4"/></svg>
  <span class="ml-[34px] mr-[50px] mb-[2px]">100%</span>
</div>
</div>
</div>
</body>
</html>
